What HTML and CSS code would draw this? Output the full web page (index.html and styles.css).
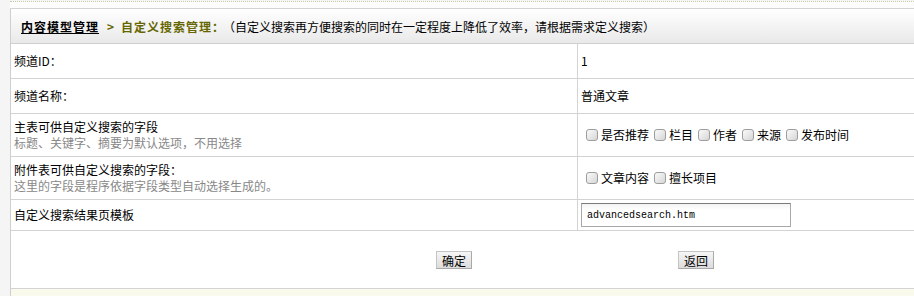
FILE: index.html
```html
<!DOCTYPE html>
<html lang="zh-CN">
<head>
    <meta charset="UTF-8">
    <title>自定义搜索管理</title>
    <link rel="stylesheet" href="styles.css">
</head>
<body>
    <div class="page">
        <div class="box">
            <div class="head">
                <a class="crumb" href="#">内容模型管理</a>
                <span class="arrow">&gt;</span>
                <span class="here">自定义搜索管理：</span>
                <span class="note">（自定义搜索再方便搜索的同时在一定程度上降低了效率，请根据需求定义搜索）</span>
            </div>
            <form class="grid" method="POST" action="#">
                <div class="cell label row-s">频道ID：</div>
                <div class="cell value row-s">1</div>

                <div class="cell label row-s">频道名称：</div>
                <div class="cell value row-s">普通文章</div>

                <div class="cell label row-m">
                    <div>主表可供自定义搜索的字段</div>
                    <div class="tip">标题、关键字、摘要为默认选项，不用选择</div>
                </div>
                <div class="cell value row-m">
                    <label><input type="checkbox" name="f" value="recommend">是否推荐</label><label><input type="checkbox" name="f" value="class">栏目</label><label><input type="checkbox" name="f" value="author">作者</label><label><input type="checkbox" name="f" value="source">来源</label><label><input type="checkbox" name="f" value="pubdate">发布时间</label>
                </div>

                <div class="cell label row-m">
                    <div>附件表可供自定义搜索的字段：</div>
                    <div class="tip">这里的字段是程序依据字段类型自动选择生成的。</div>
                </div>
                <div class="cell value row-m">
                    <label><input type="checkbox" name="a" value="body">文章内容</label><label><input type="checkbox" name="a" value="skill">擅长项目</label>
                </div>

                <div class="cell label row-t">自定义搜索结果页模板</div>
                <div class="cell value row-t">
                    <input class="text" type="text" name="template" value="advancedsearch.htm">
                </div>

                <div class="actions">
                    <button type="submit">确定</button>
                    <button type="button">返回</button>
                </div>
            </form>
            <div class="foot"></div>
        </div>
    </div>
</body>
</html>
```

FILE: styles.css
```css
html, body { margin: 0; overflow: hidden; }
body { background: #f5f5f5; font: 12px "SimSun", "Noto Sans CJK SC", sans-serif; color: #000; height: 296px; }

.page { margin: 1px 0 0 10px; border-top: 1px dotted #c9c9a3; padding-top: 6px; background: #fdfdfd; height: 300px; overflow: hidden; }
.box { width: 1128px; border-top: 1px solid #d4d4d4; border-left: 1px solid #cfcfcf; background: #fff; }

.head { height: 34px; display: flex; align-items: center; padding-left: 10px; border-bottom: 1px solid #cfcfcf; background: linear-gradient(#ffffff, #e9e9e9); white-space: nowrap; }
.crumb { color: #000; font-weight: bold; letter-spacing: 1px; text-decoration: underline; }
.arrow { color: #666600; font-weight: bold; margin: 0 7px 0 8px; }
.here { color: #666600; font-weight: bold; letter-spacing: 1px; width: 102px; }
.note { color: #000; }

.grid { display: grid; grid-template-columns: 567px 1fr; margin: 0; }
.cell { display: flex; flex-direction: column; justify-content: center; border-bottom: 1px solid #d3d3d3; padding-left: 3px; line-height: 16px; }
.cell.label { border-right: 1px solid #d3d3d3; }
.cell.value { flex-direction: row; align-items: center; justify-content: flex-start; }
.row-s { height: 34px; }
.row-m { height: 42px; }
.row-t { height: 30px; }
.tip { color: #888; }

.value label { display: inline-flex; align-items: center; }
.value input[type=checkbox] { appearance: none; -webkit-appearance: none; box-sizing: border-box; width: 12px; height: 12px; margin: 0 3px 0 5px; border: 1px solid #9d9d9d; border-radius: 3px; background: linear-gradient(135deg, #fafafa, #d6d6d6); }
.value input[type=checkbox]:checked { background: linear-gradient(135deg, #fafafa, #d6d6d6); box-shadow: inset 0 0 0 2px #eee, inset 0 0 0 4px #333; }

.text { width: 198px; height: 18px; padding: 2px 5px; border: 1px solid #a8a8a8; border-top-color: #7a7a7a; font: 10px "Liberation Mono", monospace; background: linear-gradient(#f3f3f3, #ffffff 6px); outline: none; }

.actions { grid-column: 1 / 3; height: 57px; display: flex; justify-content: center; align-items: center; gap: 206px; border-bottom: 1px solid #d3d3d3; }
.actions button { height: 18px; padding: 0 5px; font: 12px "SimSun", "Noto Sans CJK SC", sans-serif; background: linear-gradient(#f6f6f6, #dcdcdc); border: 1px solid #c4c4c4; border-right-color: #a9a9a9; border-bottom-color: #a9a9a9; color: #000; cursor: pointer; }
.actions button:hover { background: #e6e6e6; }

.foot { height: 20px; background: #f9f9ec; }
```
